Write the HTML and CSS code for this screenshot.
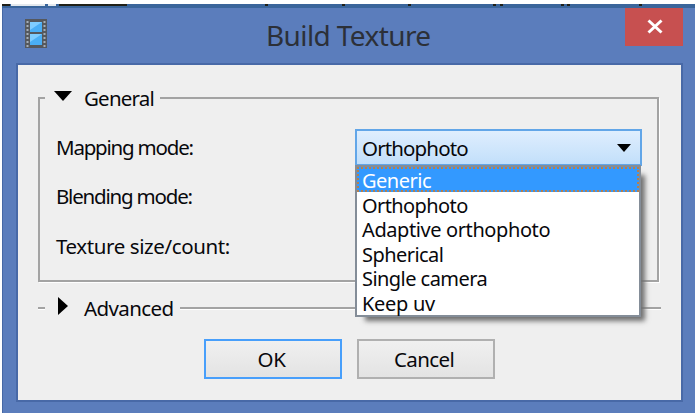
FILE: index.html
```html
<!DOCTYPE html>
<html lang="en">
<head>
<meta charset="utf-8">
<title>Build Texture</title>
<link rel="stylesheet" href="styles.css">
</head>
<body>
<div class="window">
  <svg class="backdrop" width="693" height="4" viewBox="0 0 693 4">
    <path fill="#3a659b" d="M0 0h693v4H0z"/>
    <path fill="#202018" d="M0 0h8v2H0zM57 0h68v2H57zM263 0h3v2h-3zM340 0h3v2h-3zM406 0h3v2h-3zM491 0h3v2h-3zM498 0h3v2h-3zM559 0h3v2h-3zM565 0h3v2h-3zM637 0h3v2h-3z"/>
    <path fill="#e4e9ee" d="M9 0h34v2H9zM46 0h8v2h-8z"/>
  </svg>
  <header class="titlebar">
    <svg class="film" width="24" height="30" viewBox="0 0 24 30">
      <path fill="#55585d" d="M1 0h22v29H1z"/>
      <path fill="#4aaef5" d="M6 3h12v10H6zM6 15h12v11H6z"/>
      <path fill="#7fcdff" d="M6 3h12L6 11zM6 15h12L6 23z"/>
      <path stroke="#a5adb8" stroke-width="2" stroke-dasharray="2 2" d="M3.5 2v26M20.5 2v26"/>
    </svg>
    <h1 class="title"><span class="t-title">Build Texture</span></h1>
    <button class="close" aria-label="Close">
      <svg width="16" height="15" viewBox="0 0 16 15"><path fill="none" stroke="#fff" stroke-width="3" d="M1.5 1.5l13 12M14.500 1.5l-13 12"/></svg>
    </button>
  </header>
  <main class="client">
    <fieldset class="group">
      <legend class="legend"><svg class="tri" width="18" height="10" viewBox="0 0 18 10"><path d="M0 0h18L9 10z"/></svg><span class="t-general">General</span></legend>
      <div class="row"><label class="t-mapping">Mapping mode:</label>
        <div class="combo"><span class="t-ortho">Orthophoto</span><svg width="14" height="8" viewBox="0 0 14 8"><path d="M0 0h14L7 8z"/></svg>
          <ul class="menu">
            <li class="selected"><span class="t-generic">Generic</span></li>
            <li><span class="t-ortho">Orthophoto</span></li>
            <li><span class="t-adaptive">Adaptive orthophoto</span></li>
            <li><span class="t-spherical">Spherical</span></li>
            <li><span class="t-single">Single camera</span></li>
            <li><span class="t-keep">Keep uv</span></li>
          </ul>
        </div>
      </div>
      <div class="row"><label class="t-blending">Blending mode:</label></div>
      <div class="row"><label class="t-texture">Texture size/count:</label></div>
    </fieldset>
    <div class="advanced"><i class="stub"></i><svg class="side" width="10" height="18" viewBox="0 0 10 18"><path d="M0 0l10 9-10 9z"/></svg><span class="t-advanced">Advanced</span><i class="rule"></i></div>
    <div class="buttons">
      <button class="btn default"><span class="t-ok">OK</span></button>
      <button class="btn"><span class="t-cancel">Cancel</span></button>
    </div>
  </main>
</div>
</body>
</html>
```
FILE: styles.css
```css
* { box-sizing: border-box; }
body {
  margin: 0;
  padding: 4px 0 0 2px;
  background: #fff;
  color: #08080c;
  font: 20.5px/24px "Noto Sans", "Open Sans", sans-serif;
}
.window { width: 693px; height: 409px; background: #5b7dbc; border-left: 1px solid #4668a5; }
.backdrop { display: block; margin-left: -1px; }
.titlebar { display: flex; height: 56px; }
.film { margin: 11px 0 0 21px; }
.title { flex: 1; margin: 9px 0 0 218px; font-size: 28px; line-height: 36px; font-weight: 400; color: #2c3038; }
.close { width: 58px; height: 38px; margin-right: 12px; padding: 2px 0 0 2px; border: 0; background: #c75050; }
.client {
  width: 665px; height: 337px; margin-left: 14px; padding: 21px 23px 0 20px;
  background: #efefef; border: 1px solid #fafafa; outline: 2px solid #4869a7; outline-offset: -1px;
}
.group {
  width: 621px; height: 196px; margin: 0; padding: 19px 15px 0 16px; min-width: 0;
  border: 2px solid #a3a3a3; box-shadow: 1px 1px 0 #fff;
}
.legend { display: flex; align-items: center; height: 24px; margin-left: -11px; padding: 0 6px 0 9px; background: #efefef; }
.tri { margin: 0 12px 4px 0; }
.row { display: flex; justify-content: space-between; height: 49px; white-space: nowrap; }
.row label { padding-top: 6px; }
.row .t-texture { padding-top: 7px; }
.combo {
  position: relative; display: flex; justify-content: space-between; align-items: center;
  width: 287px; height: 37px; padding: 0 9px 0 5px;
  border: 2px solid #62a6e8; background: linear-gradient(#dfeefe, #c2dffa);
}
.menu {
  position: absolute; left: -2px; top: 34px; width: 286px; height: 152px;
  margin: 0; padding: 0; list-style: none; border: 2px solid #848d98;
  background: #fff; box-shadow: 7px 7px 5px -3px #707070; font-size: 20px;
}
.menu li { height: 24.6px; padding-left: 5px; line-height: 27px; }
.menu .selected { background: #3399ff; color: #fff; outline: 2px dotted #b5804e; outline-offset: -2px; }
.advanced { display: flex; align-items: center; width: 623px; height: 24px; margin-top: 14px; }
.stub, .rule { height: 2px; background: #a3a3a3; box-shadow: 0 1px #fff; }
.stub { width: 7px; }
.rule { flex: 1; margin-left: 6px; }
.side { margin: 0 16px 4px 13px; }
.buttons { display: flex; gap: 15px; margin: 19px 0 0 166px; }
.btn {
  width: 138px; height: 40px; padding: 0; border: 2px solid #b0b0b0;
  background: linear-gradient(#f0f0f0, #e3e3e3); color: inherit; font: inherit;
}
.btn.default { border-color: #489ffb; }
span, label { white-space: nowrap; }
.t-title { letter-spacing: -0.6px; }
.t-general { letter-spacing: -0.8px; }
.t-mapping, .t-blending { letter-spacing: -1.2px; }
.t-texture { letter-spacing: -0.4px; }
.t-ortho { letter-spacing: -0.87px; }
.menu .t-ortho { letter-spacing: -0.6px; }
.t-generic { letter-spacing: -0.5px; }
.t-adaptive { letter-spacing: -0.4px; }
.t-spherical, .t-single { letter-spacing: -0.55px; }
.t-keep { letter-spacing: -0.3px; }
.t-advanced, .t-cancel { letter-spacing: -0.6px; }
.t-cancel { margin-right: 4px; }
.t-ok { letter-spacing: -0.4px; margin-right: 3px; }
```
